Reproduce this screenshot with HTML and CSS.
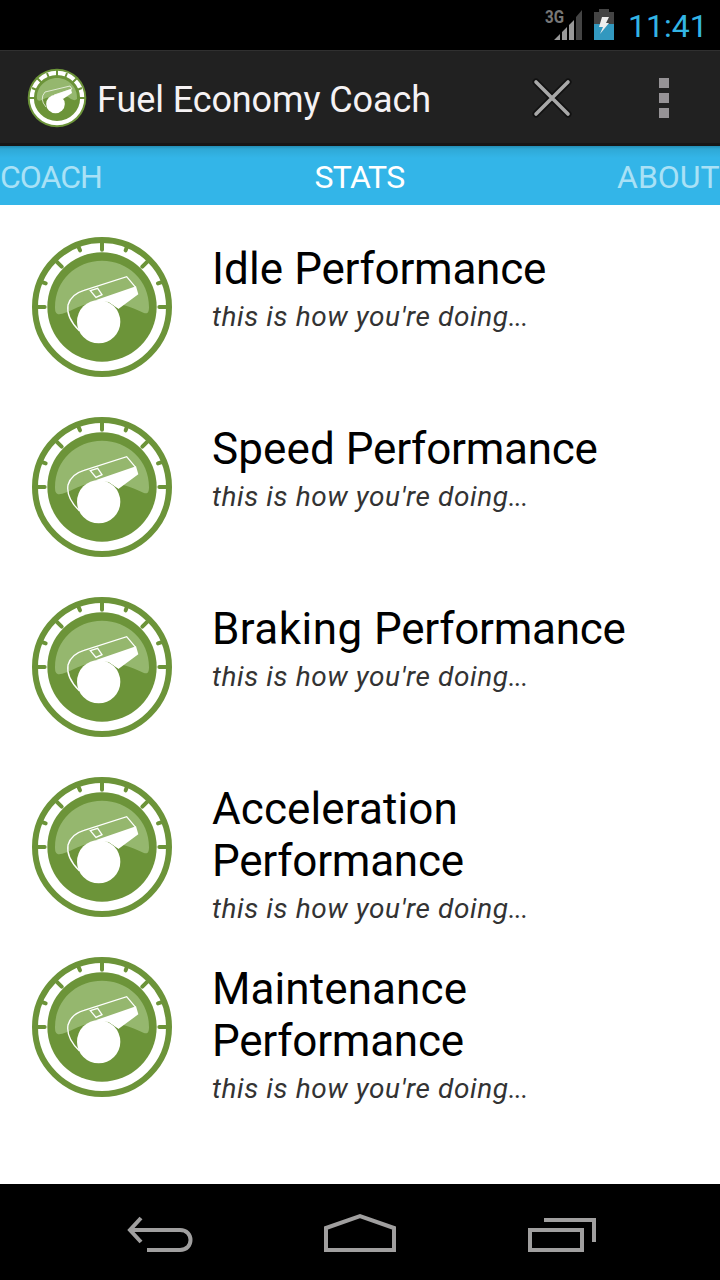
FILE: index.html
```html
<!DOCTYPE html>
<html lang="en">
<head>
<meta charset="utf-8">
<title>Fuel Economy Coach</title>
<link rel="stylesheet" href="styles.css">
</head>
<body>
<svg class="defs" width="0" height="0">
  <symbol id="dial" viewBox="36 36 420 420">
    <circle cx="246" cy="246" r="201" fill="#fff" stroke="#6c9439" stroke-width="18"/>
    <g stroke="#6c9439" stroke-width="12" stroke-linecap="round">
      <path d="M246 50V74M50 246H74M442 246H418M106 106L125 125M386 106L367 125"/>
      <path d="M174 62L180 76M322 62L317 76M62 170L77 175M430 170L414 175"/>
    </g>
    <circle cx="246" cy="246" r="164" fill="#6c9439"/>
    <path d="M105 246C105 166 168 107 246 107S387 166 387 246C387 264 382 268 370 263C330 245 300 232 246 232C195 232 170 250 140 262C115 271 105 272 105 246Z" fill="#95b76e"/>
    <path d="M190 197L320 154L343 187L226 226L190 240Z" fill="#95b76e"/>
    <path d="M178 317C150 290 140 265 144 240C150 218 168 203 192 196L320 155L347 187" fill="none" stroke="#fff" stroke-width="4"/>
    <path d="M211 197L233 190L246 209L228 217Z" fill="#95b76e" stroke="#fff" stroke-width="4"/>
    <path d="M226 226L348 184L355 208L295 252L265 231Z" fill="#fff"/>
    <path d="M264 230L295 252L290 258Z" fill="#6c9439"/>
    <circle cx="236" cy="290" r="65" fill="#fff"/>
  </symbol>
</svg>
<div class="screen">
  <header class="status">
    <svg class="signal" width="40" height="36" viewBox="0 0 40 36">
      <text class="network" x="0" y="17" textLength="19" lengthAdjust="spacingAndGlyphs">3G</text>
      <path d="M9 34L15 28V34ZM17 26L22 21V34H17ZM24 19L29 14V34H24Z" fill="#999"/>
      <path d="M31 11L37 4V34H31Z" fill="#444"/>
    </svg>
    <svg class="battery" width="20" height="31" viewBox="0 0 20 31">
      <path d="M5 0H15V3H20V15H0V3H5Z" fill="#444"/>
      <path d="M0 15H20V31H0Z" fill="#3298bf"/>
      <path d="M8 8H15L12 14H15L6 25L9 18H5Z" fill="#eee"/>
    </svg>
    <span class="clock">11:41</span>
  </header>
  <div class="action-bar">
    <svg class="logo" width="60" height="60" viewBox="0 0 60 60">
      <circle cx="30" cy="30" r="29.3" fill="#6c9439"/>
      <circle cx="30" cy="30" r="25.2" fill="none" stroke="#fff" stroke-width="4.2"/>
      <path d="M30 2V8M2 30H8M52 30H58M10 10L15 15M50 10L45 15M20 5L22 10M40 5L38 10M5 20L10 22M55 20L50 22" stroke="#6c9439" stroke-width="2"/>
      <path d="M10 31C9 19 19 10 30 10S51 19 50 31Q47 34 41 29L30 27Q20 29 15 32Q11 34 10 31Z" fill="#95b76e"/>
      <path d="M19 39Q12 31 18 24L43 18L45 21L27 27" fill="none" stroke="#fff" stroke-opacity=".7"/>
      <path d="M27 27L44 21L45 25L36 31Z" fill="#fff"/>
      <circle cx="28.5" cy="36" r="9.3" fill="#fff"/>
    </svg>
    <h1 class="title">Fuel Economy Coach</h1>
    <svg class="close" width="40" height="40" viewBox="0 0 40 40">
      <path d="M4 4L36 36M36 4L4 36" stroke="#111" stroke-width="7" stroke-linecap="round"/>
      <path d="M4 4L36 36M36 4L4 36" stroke="#a8a8a8" stroke-width="3.6" stroke-linecap="round"/>
    </svg>
    <div class="overflow"><i></i><i></i><i></i></div>
  </div>
  <nav class="tabs">
    <span class="tab tab-coach">COACH</span>
    <span class="tab tab-stats">STATS</span>
    <span class="tab tab-about">ABOUT</span>
  </nav>
  <main class="list">
    <section class="row"><svg class="dial"><use href="#dial"/></svg><div class="copy"><h2><span class="lead">Idle </span>Performance</h2><p>this is how you're doing<span class="dots">...</span></p></div></section>
    <section class="row"><svg class="dial"><use href="#dial"/></svg><div class="copy"><h2><span class="lead">Speed </span>Performance</h2><p>this is how you're doing<span class="dots">...</span></p></div></section>
    <section class="row"><svg class="dial"><use href="#dial"/></svg><div class="copy"><h2><span class="lead wide">Braking </span>Performance</h2><p>this is how you're doing<span class="dots">...</span></p></div></section>
    <section class="row"><svg class="dial"><use href="#dial"/></svg><div class="copy"><h2><span class="lead">Acceleration</span><br>Performance</h2><p>this is how you're doing<span class="dots">...</span></p></div></section>
    <section class="row"><svg class="dial"><use href="#dial"/></svg><div class="copy"><h2><span class="lead">Maintenance</span><br>Performance</h2><p>this is how you're doing<span class="dots">...</span></p></div></section>
  </main>
  <footer class="nav">
    <svg width="68" height="38" viewBox="0 0 68 38" fill="none" stroke="#a09f9f" stroke-width="4">
      <path d="M14 2L3 14L14 26M3 14H53C67 14 67 34 53 34H20"/>
    </svg>
    <svg width="72" height="38" viewBox="0 0 72 38" fill="none" stroke="#a09f9f" stroke-width="4">
      <path d="M2 36V14L36 2.2L70 14V36Z"/>
    </svg>
    <svg width="68" height="34" viewBox="0 0 68 34" fill="none" stroke="#a09f9f" stroke-width="4">
      <path d="M2 12H54V32H2ZM16 2H66V24"/>
    </svg>
  </footer>
</div>
</body>
</html>
```
FILE: styles.css
```css
* { box-sizing: border-box; }
body { margin: 0; background: #000; font-family: Roboto, sans-serif; }
h1, h2, p { margin: 0; font-weight: 400; }
.defs { display: block; height: 0; }
.screen { width: 720px; height: 1280px; display: flex; flex-direction: column; overflow: hidden; background: #fff; }
.status { height: 50px; flex: none; background: #000; display: flex; align-items: flex-start; padding: 6px 0 0 545px; }
.signal { margin-right: 9px; flex: none; }
.network { font: 700 18px Roboto, sans-serif; fill: #777; }
.battery { margin-top: 3px; flex: none; }
.clock { margin-left: 14px; font-size: 32px; line-height: 40px; color: #33b5e5; white-space: nowrap; }
.action-bar { height: 96px; flex: none; background: #212121; border-top: 1px solid #303030; border-bottom: 3px solid #171717; display: flex; align-items: center; padding: 1px 51px 0 27px; }
.logo { flex: none; }
.title { margin-left: 10px; padding-top: 4px; width: 435px; color: #f5f2f4; font-size: 36px; line-height: 44px; white-space: nowrap; letter-spacing: -0.1px; }
.close { flex: none; }
.overflow { margin-left: auto; display: grid; gap: 5px; }
.overflow i { width: 10px; height: 10px; background: #969396; }
.tabs { height: 59px; flex: none; background: linear-gradient(#238db4 0, #2fa9d6 3px, #33b5e8 12px); display: grid; grid-template-columns: 314.5px 302.5px 103px; font-size: 32px; line-height: 62px; }
.tab { color: #a9e1f6; white-space: nowrap; letter-spacing: -1px; }
.tab-stats { color: #fff; letter-spacing: -0.7px; }
.tab-about { letter-spacing: 0; }
.list { flex: 1; padding-top: 32px; background: #fff; }
.row { height: 180px; display: flex; gap: 40px; padding-left: 32px; }
.dial { width: 140px; height: 140px; flex: none; }
.copy { padding-top: 6px; white-space: nowrap; }
.copy h2 { font-size: 44px; line-height: 52px; color: #000; letter-spacing: -0.25px; }
.lead { letter-spacing: 0.1px; }
.wide { letter-spacing: 0.45px; }
.copy p { font-size: 28px; line-height: 34px; margin-top: 5px; font-style: italic; color: #333; letter-spacing: 0.6px; }
.dots { letter-spacing: -0.8px; }
.nav { height: 96px; flex: none; background: #000; display: grid; grid-template-columns: 197px 204px 68px; padding: 30px 0 0 127px; }
.nav svg:nth-child(1) { margin-top: 2px; }
.nav svg:nth-child(2) { margin-top: 0; }
.nav svg:nth-child(3) { margin-top: 4px; }
```
